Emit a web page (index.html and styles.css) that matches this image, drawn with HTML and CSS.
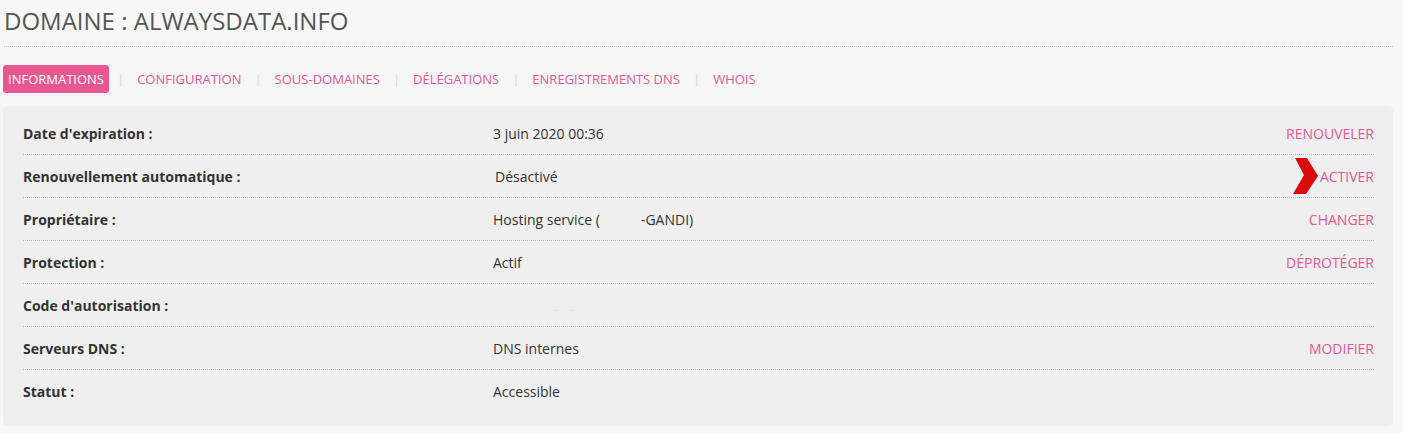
FILE: index.html
```html
<!DOCTYPE html>
<html lang="fr">
<head>
<meta charset="utf-8">
<title>Domaine : alwaysdata.info</title>
<link rel="stylesheet" href="styles.css">
</head>
<body>
<div class="page">
  <h1 class="title">DOMAINE : ALWAYSDATA.INFO</h1>
  <nav class="tabs">
    <a class="tab active" href="#">INFORMATIONS</a>
    <span class="sep">|</span>
    <a class="tab" href="#">CONFIGURATION</a>
    <span class="sep">|</span>
    <a class="tab" href="#">SOUS-DOMAINES</a>
    <span class="sep">|</span>
    <a class="tab" href="#">DÉLÉGATIONS</a>
    <span class="sep">|</span>
    <a class="tab" href="#">ENREGISTREMENTS DNS</a>
    <span class="sep">|</span>
    <a class="tab" href="#">WHOIS</a>
  </nav>
  <div class="panel">
    <div class="row">
      <div class="label">Date d'expiration :</div>
      <div class="value">3 juin 2020 00:36</div>
      <div class="action"><a href="#">RENOUVELER</a></div>
    </div>
    <div class="row">
      <div class="label">Renouvellement automatique :</div>
      <div class="value indent">Désactivé</div>
      <div class="action">
        <span class="chevron"><svg width="26" height="37" viewBox="0 0 26 37"><polygon points="2,0 14,0 25,18 13,36 0,36 11,17" fill="#dc0b0b"/></svg></span>
        <a href="#">ACTIVER</a>
      </div>
    </div>
    <div class="row">
      <div class="label">Propriétaire :</div>
      <div class="value">Hosting service (<span class="redacted"></span>-GANDI)</div>
      <div class="action"><a href="#">CHANGER</a></div>
    </div>
    <div class="row">
      <div class="label">Protection :</div>
      <div class="value">Actif</div>
      <div class="action"><a href="#">DÉPROTÉGER</a></div>
    </div>
    <div class="row">
      <div class="label">Code d'autorisation :</div>
      <div class="value"><span class="dots"><i></i><i></i></span></div>
      <div class="action"></div>
    </div>
    <div class="row">
      <div class="label">Serveurs DNS :</div>
      <div class="value">DNS internes</div>
      <div class="action"><a href="#">MODIFIER</a></div>
    </div>
    <div class="row last">
      <div class="label">Statut :</div>
      <div class="value">Accessible</div>
      <div class="action"></div>
    </div>
  </div>
</div>
</body>
</html>
```
FILE: styles.css
```css
html, body {
  margin: 0;
  padding: 0;
  background: #f7f7f7;
  font-family: "Open Sans", "DejaVu Sans", sans-serif;
  color: #333;
}
.page {
  padding: 0 10px 0 3px;
}
.title {
  margin: 0 0 0 1px;
  padding: 4px 0 9px;
  font-size: 24px;
  font-weight: 400;
  line-height: 33px;
  color: #555;
  border-bottom: 1px dotted #c8c8c8;
}
.tabs {
  display: flex;
  align-items: center;
  margin-top: 18px;
  height: 28px;
}
.tab {
  font-size: 13px;
  color: #e8578f;
  text-decoration: none;
  line-height: 28px;
  padding: 0 5px;
  border-radius: 3px;
}
.tab.active {
  background: #e8578f;
  color: #fff;
}
.sep {
  color: #d6dbe0;
  font-size: 13px;
  margin: 0 8px;
}
.panel {
  margin-top: 13px;
  background: #efefef;
  border-radius: 5px;
  padding: 6px 19px 14px 20px;
}
.row {
  display: grid;
  grid-template-columns: 470px 1fr auto;
  align-items: center;
  height: 42px;
  border-bottom: 1px dotted #bdbdbd;
  font-size: 14px;
}
.row.last {
  border-bottom: none;
}
.label {
  font-weight: 700;
  color: #333;
}
.value {
  color: #333;
}
.value.indent {
  padding-left: 2px;
}
.redacted {
  display: inline-block;
  width: 41px;
}
.dots {
  display: inline-flex;
  gap: 14px;
  padding-left: 63px;
  padding-top: 8px;
}
.dots i {
  display: block;
  width: 1px;
  height: 1px;
  background: #c8c8c8;
}
.action {
  display: flex;
  align-items: center;
  justify-content: flex-end;
}
.action a {
  color: #e8578f;
  text-decoration: none;
  font-size: 14px;
}
.chevron {
  display: block;
  height: 37px;
  margin-right: 1px;
}
.chevron svg {
  display: block;
}
```
